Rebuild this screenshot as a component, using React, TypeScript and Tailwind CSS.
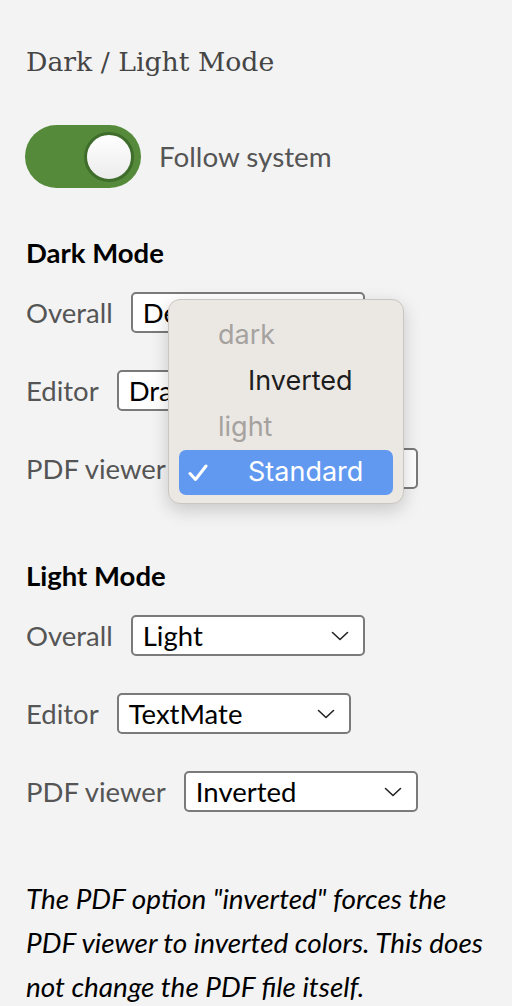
import React from "react";

/** Small chevron like the native select arrow */
function Chevron() {
  return (
    <svg width="18" height="10" viewBox="0 0 18 10" className="shrink-0">
      <path d="M1.5 1.5 L9 8.5 L16.5 1.5" fill="none" stroke="#222" strokeWidth="1.6" strokeLinecap="round" strokeLinejoin="round" />
    </svg>
  );
}

function Select({ value }: { value: string }) {
  return (
    <div className="w-[234px] h-[41px] flex items-center justify-between rounded-[5px] border-2 border-[#7a7a7a] bg-white pl-[10px] pr-[14px] text-[27.5px] text-black">
      <span className="leading-none">{value}</span>
      <Chevron />
    </div>
  );
}

function Row({ label, value }: { label: string; value: string }) {
  return (
    <div className="flex items-center h-[41px] gap-[18px]">
      <span className="text-[27.5px] text-[#555] leading-none">{label}</span>
      <Select value={value} />
    </div>
  );
}

function Toggle() {
  return (
    <div className="w-[116px] h-[63px] rounded-full bg-[#548a3a] flex items-center justify-end pr-[7px]">
      <div className="w-[50px] h-[50px] rounded-full border-[3px] border-[#3f6d2b] bg-gradient-to-b from-white to-[#ececec]" />
    </div>
  );
}

function Popup() {
  return (
    <div
      className="absolute left-[168px] top-[299px] w-[236px] h-[205px] rounded-[12px] border border-[#c9c6c2] bg-[#ebe8e4] shadow-[0_6px_18px_rgba(0,0,0,0.18)] px-[10px] pt-[12px] text-[27px]"
      style={{ fontFamily: "Inter, 'Open Sans', sans-serif" }}
    >
      <div className="h-[46px] flex items-center pl-[39px] text-[#a5a29f]">dark</div>
      <div className="h-[46px] flex items-center pl-[69px] text-[#1d1d1d]">Inverted</div>
      <div className="h-[46px] flex items-center pl-[39px] text-[#a5a29f]">light</div>
      <div className="h-[45px] flex items-center rounded-[7px] bg-[#6199f1] text-white">
        <svg width="20" height="18" viewBox="0 0 20 18" className="ml-[9px]">
          <path d="M2 9.5 L7.5 15.5 L18 2" fill="none" stroke="white" strokeWidth="3" strokeLinecap="round" strokeLinejoin="round" />
        </svg>
        <span className="ml-[40px]">Standard</span>
      </div>
    </div>
  );
}

export default function App() {
  return (
    <div
      className="relative min-h-[1006px] w-[512px] bg-[#f3f3f3] pl-[26px] pr-[10px] pt-[44px] overflow-hidden"
      style={{ fontFamily: "Lato, 'Noto Sans', sans-serif" }}
    >
      <h2
        className="text-[26.7px] leading-[36px] text-[#454545]"
        style={{ fontFamily: "'DejaVu Serif', 'Liberation Serif', serif" }}
      >
        Dark / Light Mode
      </h2>

      <div className="mt-[45px] flex items-center -ml-px">
        <Toggle />
        <span className="ml-[18px] text-[27.8px] text-[#555]">Follow system</span>
      </div>

      <h3 className="mt-[50px] text-[27.5px] font-bold leading-[30px] text-black">Dark Mode</h3>
      <div className="mt-[24px] flex flex-col gap-[37px]">
        <Row label="Overall" value="Default" />
        <Row label="Editor" value="Dracula" />
        <Row label="PDF viewer" value="Standard" />
      </div>

      <h3 className="mt-[72px] text-[27.5px] font-bold leading-[30px] text-black">Light Mode</h3>
      <div className="mt-[24px] flex flex-col gap-[37px]">
        <Row label="Overall" value="Light" />
        <Row label="Editor" value="TextMate" />
        <Row label="PDF viewer" value="Inverted" />
      </div>

      <p className="mt-[64px] text-[27.9px] italic leading-[44px] text-black whitespace-nowrap">
        The PDF option "inverted" forces the
        <br />
        PDF viewer to inverted colors. This does
        <br />
        not change the PDF file itself.
      </p>

      <Popup />
    </div>
  );
}
